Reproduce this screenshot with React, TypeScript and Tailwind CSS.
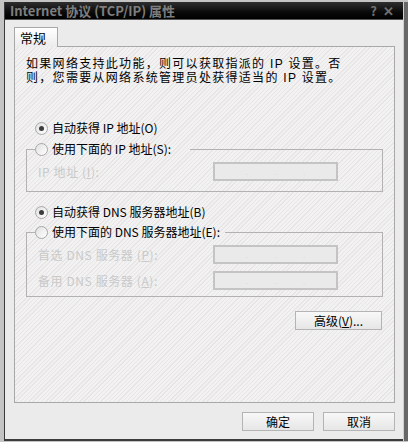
import type { ReactNode } from "react";

const font = { fontFamily: '"Noto Sans CJK SC", "Noto Sans", sans-serif' };

function Radio({ checked, children }: { checked?: boolean; children: ReactNode }) {
  return (
    <span className="flex items-center h-[16px]">
      <span className="w-[13px] h-[13px] rounded-full border border-[#a8a8a8] bg-[linear-gradient(135deg,#e0e0e0,#ffffff)] flex items-center justify-center">
        {checked && <span className="w-[5px] h-[5px] rounded-full bg-[#3c3c3c]" />}
      </span>
      <span className="ml-[4px] text-[12px] leading-[16px] text-black">{children}</span>
    </span>
  );
}

function IpBox() {
  return (
    <div className="w-[125px] h-[19px] border-2 border-[#c4c4c4] bg-[#ebeaea] flex items-end justify-center gap-[27px] pb-[3px] text-[6px] leading-none text-[#c8c8c8]">
      <span>.</span>
      <span>.</span>
      <span>.</span>
    </div>
  );
}

function Field({ label, hot, tail }: { label: string; hot: string; tail: string }) {
  return (
    <div className="flex items-center h-[19px]">
      <span className="w-[175px] text-[12px] text-[#c9c9c9] tracking-[0.6px]">
        {label}(<span className="underline">{hot}</span>){tail}
      </span>
      <IpBox />
    </div>
  );
}

function Btn({ children, w }: { children: ReactNode; w: string }) {
  return (
    <div
      className={`${w} h-[19px] border border-[#b4b4b4] bg-[linear-gradient(#f8f8f8,#e6e6e6)] flex items-center justify-center text-[12px] text-black`}
    >
      {children}
    </div>
  );
}

export default function App() {
  return (
    <div className="w-[408px] h-[442px] bg-[#c4c4c4] pt-[2px] overflow-hidden" style={font}>
      <div className="ml-[4px] w-[404px] h-[439px] flex">
        <div className="w-[399px] h-full border-l border-[#3a3a3a] border-b-2 border-b-[#3c3c3c] bg-[#ecebeb] flex flex-col">
          {/* title bar */}
          <div className="h-[18px] bg-[linear-gradient(#2e2e2e,#0a0a0a_60%,#000)] flex items-center justify-between px-[5px] border-b border-[#555]">
            <span className="text-[13px] font-bold text-[#7e7e7e] leading-none">
              Internet 协议 (TCP/IP) 属性
            </span>
            <span className="flex gap-[6px] text-[13px] font-bold text-[#707070] leading-none mr-[4px]">
              <span>?</span>
              <span>✕</span>
            </span>
          </div>

          <div className="pl-[9px] pr-[8px] pt-[7px]">
            {/* tab */}
            <div className="w-[44px] h-[20px] border border-b-0 border-[#a8a8a8] bg-[linear-gradient(#ffffff,#ececec)] text-[13px] leading-[20px] pl-[5px] text-black relative z-10 -mb-px">
              常规
            </div>

            {/* panel */}
            <div className="h-[357px] border border-[#a8a8a8] bg-[#f2f1f1] bg-[repeating-linear-gradient(135deg,#f3f2f2_0px,#f3f2f2_2px,#e7e5e5_2px,#e7e5e5_3px)] px-[11px] pt-[10px] text-black">
              <div className="font-['Liberation_Sans','Noto_Sans_CJK_SC',sans-serif] text-[12px] leading-[14px] tracking-[1.3px] whitespace-nowrap">
                <div className="h-[14px]">如果网络支持此功能，则可以获取指派的 IP 设置。否</div>
                <div className="h-[14px]">则，您需要从网络系统管理员处获得适当的 IP 设置。</div>
              </div>

              <div className="mt-[35px] ml-[9px]">
                <Radio checked>自动获得 IP 地址(O)</Radio>
              </div>

              <fieldset className="mt-[5px] w-[357px] border border-[#b2b2b2] pb-[10px]">
                <legend className="ml-[8px] w-[155px] h-[16px]">
                  <Radio>使用下面的 IP 地址(S):</Radio>
                </legend>
                <div className="pl-[11px] mt-[5px]">
                  <Field label="IP 地址 " hot="I" tail=":" />
                </div>
              </fieldset>

              <div className="mt-[12px] ml-[9px]">
                <Radio checked>自动获得 DNS 服务器地址(B)</Radio>
              </div>

              <fieldset className="mt-[4px] w-[357px] border border-[#b2b2b2] pb-[6px]">
                <legend className="ml-[8px] w-[190px] h-[16px]">
                  <Radio>使用下面的 DNS 服务器地址(E):</Radio>
                </legend>
                <div className="pl-[11px] mt-[5px] flex flex-col gap-[7px]">
                  <Field label="首选 DNS 服务器 " hot="P" tail=":" />
                  <Field label="备用 DNS 服务器 " hot="A" tail=":" />
                </div>
              </fieldset>

              <div className="mt-[14px] flex justify-end w-[356px]">
                <Btn w="w-[87px]">
                  <span>
                    高级(<span className="underline">V</span>)...
                  </span>
                </Btn>
              </div>
            </div>

            {/* footer buttons */}
            <div className="mt-[9px] flex justify-end gap-[9px]">
              <Btn w="w-[72px]">确定</Btn>
              <Btn w="w-[72px]">取消</Btn>
            </div>
          </div>
        </div>
        <div className="flex-1 bg-[#686868] border-l border-[#d0d0d0]" />
      </div>
    </div>
  );
}
